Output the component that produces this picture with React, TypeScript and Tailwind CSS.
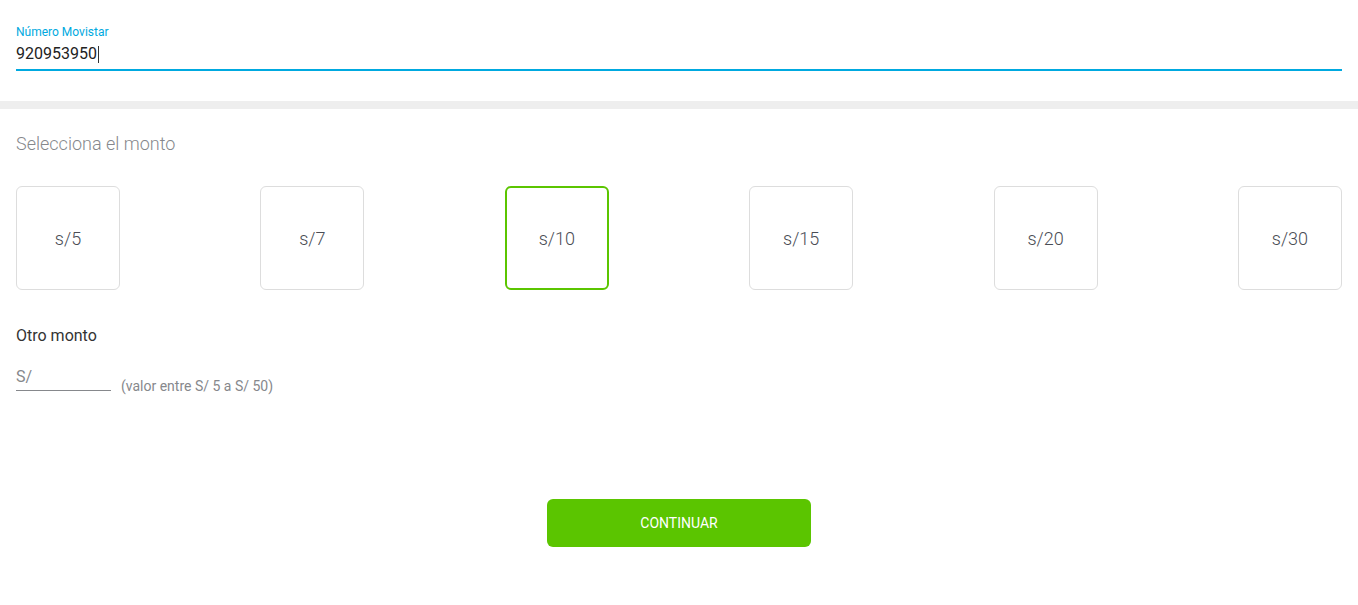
import { useState } from "react"

const montos = [5, 7, 10, 15, 20, 30]

export default function App() {
  const [selected, setSelected] = useState(10)

  return (
    <div className="min-h-screen bg-white font-['Roboto',sans-serif]">
      <div className="px-4 pt-[25px]">
        <label className="block text-[12px] leading-[14px] text-[#00a9e0]">Número Movistar</label>
        <div className="flex h-[32px] items-center border-b-2 border-[#00a9e0] text-[16px] text-[#222]">
          920953950<span className="ml-[1px] inline-block h-[17px] w-[1px] bg-[#333]" />
        </div>
      </div>

      <div className="mt-[30px] h-[8px] bg-[#eeeeee]" />

      <div className="px-4">
        <h2 className="mt-[23px] text-[18px] font-light leading-[24px] text-[#86888c]">Selecciona el monto</h2>

        <div className="mt-[30px] flex justify-between">
          {montos.map((m) => (
            <button
              key={m}
              onClick={() => setSelected(m)}
              className={
                m === selected
                  ? "flex h-[104px] w-[104px] items-center justify-center rounded-[6px] border-2 border-[#5bc500] text-[18px] font-light text-[#4a4d55]"
                  : "flex h-[104px] w-[104px] items-center justify-center rounded-[6px] border border-[#dddddd] text-[18px] font-light text-[#4a4d55]"
              }
            >
              s/{m}
            </button>
          ))}
        </div>

        <h3 className="mt-[36px] text-[16px] leading-[20px] text-[#333]">Otro monto</h3>

        <div className="mt-[22px] flex items-end">
          <div className="w-[95px] border-b border-[#86888c] pb-[4px] text-[16px] leading-[18px] text-[#86888c]">S/</div>
          <span className="ml-[10px] text-[14px] leading-[16px] text-[#86888c] -mb-[3px]">(valor entre S/ 5 a S/ 50)</span>
        </div>

        <div className="mt-[108px] flex justify-center">
          <button className="h-[48px] w-[264px] rounded-[6px] bg-[#5bc500] text-[14px] font-normal text-white">
            CONTINUAR
          </button>
        </div>
      </div>
    </div>
  )
}
